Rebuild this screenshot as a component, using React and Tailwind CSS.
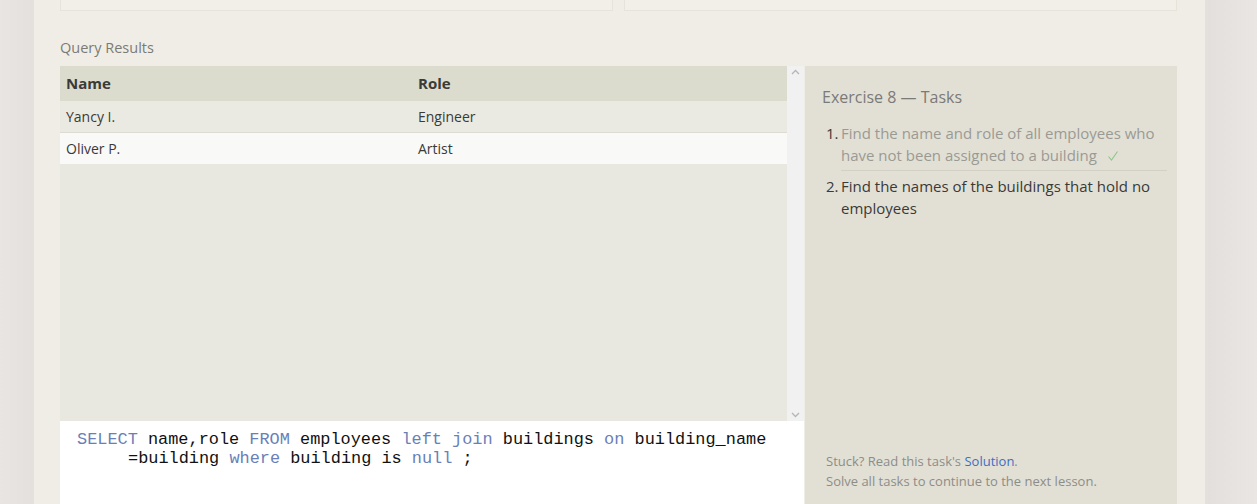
import React from "react";

const sans = { fontFamily: '"Open Sans", "Noto Sans", sans-serif' };
const mono = { fontFamily: '"Liberation Mono", monospace' };

function K({ children }) {
  return <span className="text-[#6a7fb8]">{children}</span>;
}

export default function App() {
  return (
    <div className="w-[1257px] h-[504px] overflow-hidden bg-[#e8e5e2] flex" style={sans}>
      <div className="w-[34px] shrink-0 bg-gradient-to-r from-[#e8e5e3] to-[#e3e0dd]" />
      <div className="w-[1171px] shrink-0 bg-[#f0ede6] flex flex-col px-[26px]">
        {/* top boxes */}
        <div className="flex gap-[11px] h-[11px]">
          <div className="w-[553px] h-[11px] border border-t-0 border-[#e6e3da] bg-[#f2efe9]" />
          <div className="w-[553px] h-[11px] border border-t-0 border-[#e6e3da] bg-[#f2efe9]" />
        </div>
        <div className="mt-[27px] h-[20px] text-[14.5px] leading-[20px] text-[#7b7b76]">Query Results</div>
        <div className="mt-[8px] flex h-[438px]">
          {/* left column */}
          <div className="w-[744px] flex flex-col">
            <div className="flex h-[355px] bg-[#e9e8e0]">
              <div className="flex-1 flex flex-col">
                <div className="flex h-[35px] items-center bg-[#dbdbce] text-[15px] font-bold text-[#3a3a38]">
                  <div className="w-[352px] pl-[6px]">Name</div>
                  <div className="pl-[6px]">Role</div>
                </div>
                <div className="flex h-[32px] items-center bg-[#ebeae2] text-[14px] text-[#3a3a38] border-b border-[#dedcd2]">
                  <div className="w-[352px] pl-[6px]">Yancy I.</div>
                  <div className="pl-[6px]">Engineer</div>
                </div>
                <div className="flex h-[31px] items-center bg-[#f9f9f8] text-[14px] text-[#3a3a38]">
                  <div className="w-[352px] pl-[6px]">Oliver P.</div>
                  <div className="pl-[6px]">Artist</div>
                </div>
              </div>
              <div className="w-[17px] bg-[#f1f1f1] flex flex-col items-center justify-between py-[3px]">
                <svg width="9" height="6" viewBox="0 0 9 6"><path d="M1 5 L4.5 1.5 L8 5" stroke="#b5b5b5" strokeWidth="1.3" fill="none" /></svg>
                <svg width="9" height="6" viewBox="0 0 9 6"><path d="M1 1 L4.5 4.5 L8 1" stroke="#b5b5b5" strokeWidth="1.3" fill="none" /></svg>
              </div>
            </div>
            <div className="flex-1 bg-white pt-[9px] pl-[17px] text-[16.9px] leading-[19px] text-[#111]" style={mono}>
              <div className="whitespace-pre"><K>SELECT</K> name,role <K>FROM</K> employees <K>left</K> <K>join</K> buildings <K>on</K> building_name</div>
              <div className="whitespace-pre pl-[51px]">=building <K>where</K> building is <K>null</K> ;</div>
            </div>
          </div>
          {/* right panel */}
          <div className="ml-[1px] w-[372px] bg-[#e2e0d5] flex flex-col pl-[17px] pr-[10px]">
            <div className="mt-[20px] text-[16px] leading-[22px] text-[#7a7a78]">Exercise 8 — Tasks</div>
            <ol className="mt-[14px] text-[15px] leading-[22px]">
              <li className="flex">
                <span className="w-[19px] pl-[4px] text-[#3a3a38]">1.</span>
                <div className="flex-1 text-[#9a9a94] border-b border-[#d3d1c5] pb-[4px]">
                  Find the name and role of all employees who have not been assigned to a building
                  <svg className="inline-block ml-[10px] align-[-1px]" width="12" height="12" viewBox="0 0 12 12">
                    <path d="M1.5 6.5 L4.5 10 L10.5 1.5" stroke="#92c48d" strokeWidth="1.1" fill="none" />
                  </svg>
                </div>
              </li>
              <li className="flex mt-[4px]">
                <span className="w-[19px] pl-[4px] text-[#3a3a38]">2.</span>
                <div className="flex-1 text-[#3a3a38] pr-[14px]">Find the names of the buildings that hold no employees</div>
              </li>
            </ol>
            <div className="mt-auto mb-[13px] pl-[4px] text-[13px] leading-[20px] text-[#8d8d88]">
              <div>Stuck? Read this task's <span className="text-[#3c6fc2]">Solution</span>.</div>
              <div>Solve all tasks to continue to the next lesson.</div>
            </div>
          </div>
        </div>
      </div>
      <div className="flex-1 bg-gradient-to-r from-[#e2dfdd] to-[#e9e6e3]" />
    </div>
  );
}
